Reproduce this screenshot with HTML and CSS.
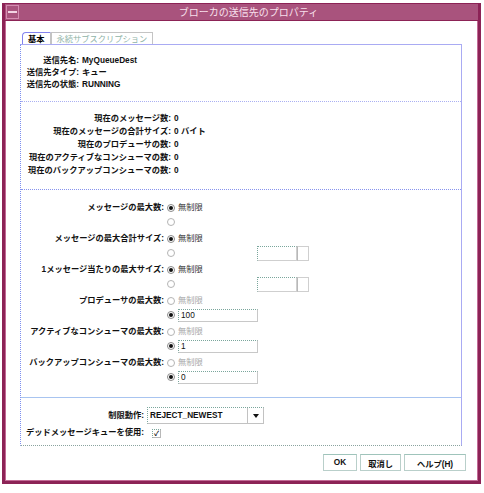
FILE: index.html
```html
<!DOCTYPE html>
<html lang="ja">
<head>
  <meta charset="UTF-8">
  <title>ブローカの送信先のプロパティ</title>
  <link rel="stylesheet" href="styles.css">
</head>
<body>
  <div class="window">
    <div class="titlebar">
      <div class="menu-btn"><span></span></div>
      <div class="title">ブローカの送信先のプロパティ</div>
    </div>
    <div class="content">
      <div class="tabs">
        <div class="tab active">基本</div>
        <div class="tab">永続サブスクリプション</div>
      </div>
      <div class="panel">
        <div class="section info">
          <div class="label">送信先名:</div><div class="value">MyQueueDest</div>
          <div class="label">送信先タイプ:</div><div class="value">キュー</div>
          <div class="label">送信先の状態:</div><div class="value">RUNNING</div>
        </div>
        <div class="section stats">
          <div class="label">現在のメッセージ数:</div><div class="value">0</div>
          <div class="label">現在のメッセージの合計サイズ:</div><div class="value">0 バイト</div>
          <div class="label">現在のプロデューサの数:</div><div class="value">0</div>
          <div class="label">現在のアクティブなコンシューマの数:</div><div class="value">0</div>
          <div class="label">現在のバックアップコンシューマの数:</div><div class="value">0</div>
        </div>
        <div class="section limits">
          <div class="label">メッセージの最大数:</div>
          <div class="opt"><span class="radio on"></span><span class="opt-text">無制限</span></div>
          <div class="label"></div>
          <div class="opt"><span class="radio"></span></div>
          <div class="label group">メッセージの最大合計サイズ:</div>
          <div class="opt group"><span class="radio on"></span><span class="opt-text">無制限</span></div>
          <div class="label"></div>
          <div class="opt"><span class="radio"></span><span class="size-box"><span class="size-field"></span><span class="size-unit"></span></span></div>
          <div class="label group">1メッセージ当たりの最大サイズ:</div>
          <div class="opt group"><span class="radio on"></span><span class="opt-text">無制限</span></div>
          <div class="label"></div>
          <div class="opt"><span class="radio"></span><span class="size-box"><span class="size-field"></span><span class="size-unit"></span></span></div>
          <div class="label group">プロデューサの最大数:</div>
          <div class="opt group"><span class="radio"></span><span class="opt-text off">無制限</span></div>
          <div class="label"></div>
          <div class="opt"><span class="radio on"></span><span class="field">100</span></div>
          <div class="label group">アクティブなコンシューマの最大数:</div>
          <div class="opt group"><span class="radio"></span><span class="opt-text off">無制限</span></div>
          <div class="label"></div>
          <div class="opt"><span class="radio on"></span><span class="field">1</span></div>
          <div class="label group">バックアップコンシューマの最大数:</div>
          <div class="opt group"><span class="radio"></span><span class="opt-text off">無制限</span></div>
          <div class="label"></div>
          <div class="opt"><span class="radio on"></span><span class="field">0</span></div>
        </div>
        <div class="section behavior">
          <div class="label">制限動作:</div>
          <div class="opt">
            <div class="combo"><span class="combo-text">REJECT_NEWEST</span><span class="combo-btn"></span></div>
          </div>
          <div class="label">デッドメッセージキューを使用:</div>
          <div class="opt"><span class="check">&#10003;</span></div>
        </div>
      </div>
      <div class="buttons">
        <button class="btn ok">OK</button>
        <button class="btn cancel">取消し</button>
        <button class="btn help">ヘルプ(H)</button>
      </div>
    </div>
  </div>
</body>
</html>
```

FILE: styles.css
```css
body {
  margin: 0;
  background: #fff;
  font-family: "Liberation Sans", "Noto Sans CJK JP", sans-serif;
  font-size: 8.25px;
  color: #111;
}
.window {
  margin: 3px 0 0 2px;
  width: 479px;
  height: 481px;
  box-sizing: border-box;
  border: 3px solid #8c2356;
  border-top-width: 1px;
  box-shadow: inset 0 0 0 1px #c36a96;
  background: #fff;
  display: flex;
  flex-direction: column;
}
.titlebar {
  height: 16px;
  background: #a9537d;
  display: flex;
  align-items: center;
  border-bottom: 1px solid #8c2356;
}
.menu-btn {
  width: 13px;
  height: 14px;
  margin-left: 1px;
  border: 1px solid #d48bb0;
  box-sizing: border-box;
  display: flex;
  align-items: center;
  justify-content: center;
}
.menu-btn span {
  width: 9px;
  height: 2px;
  background: #f2d4e3;
}
.title {
  flex: 1;
  text-align: center;
  color: #f8e0ec;
  font-size: 10px;
  font-family: "Noto Sans CJK JP", sans-serif;
  line-height: 16px;
}
.content {
  flex: 1;
  padding-top: 11px;
}
.tabs {
  display: flex;
  margin-left: 17px;
  height: 12px;
}
.tab {
  font-family: "Noto Sans CJK JP", sans-serif;
  font-size: 8.25px;
  line-height: 11px;
  padding: 0 5px;
  border: 1px solid #c4c4c4;
  border-bottom: none;
  color: #8fb4a8;
}
.tab.active {
  color: #000;
  font-weight: bold;
  border-color: #8383ee;
  border-right-color: #c4c4c4;
  border-top-left-radius: 4px;
}
.panel {
  margin: 0 16px 0 15px;
  border: 1px solid #a9abf3;
  border-left: 1px dotted #7d8ff0;
  border-bottom: 1px dotted #8aa39f;
  height: 402px;
  box-sizing: border-box;
}
.section {
  display: grid;
  column-gap: 3px;
  padding-left: 4px;
  align-items: center;
  font-weight: bold;
}
.label, .value {
  white-space: nowrap;
  line-height: 12px;
  height: 12px;
}
.label {
  text-align: right;
}
.info {
  grid-template-columns: 54px 1fr;
  grid-auto-rows: 12px;
  padding-top: 10px;
  padding-bottom: 10px;
  border-bottom: 1px dotted #aab0f2;
}
.stats {
  grid-template-columns: 146px 1fr;
  grid-auto-rows: 13px;
  padding-top: 10px;
  padding-bottom: 12px;
  border-bottom: 1px dotted #8793ee;
}
.limits {
  grid-template-columns: 139px 1fr;
  padding-top: 11px;
  padding-bottom: 13px;
  border-bottom: 1px solid #a8c4f0;
}
.limits .label {
  height: 14px;
  line-height: 14px;
}
.limits .group {
  margin-top: 3px;
}
.opt {
  display: flex;
  align-items: center;
  height: 14px;
  line-height: 14px;
  font-weight: normal;
}
.radio {
  width: 8px;
  height: 8px;
  border: 1px solid #b4b4b4;
  border-radius: 50%;
  box-sizing: border-box;
  display: inline-flex;
  align-items: center;
  justify-content: center;
  flex-shrink: 0;
}
.radio.on {
  border-color: #8a8a8a;
}
.radio.on::after {
  content: "";
  width: 4px;
  height: 4px;
  border-radius: 50%;
  background: #111;
}
.opt-text {
  margin-left: 3px;
  color: #333;
}
.opt-text.off {
  color: #a8a8a8;
}
.field {
  margin-left: 3px;
  width: 80px;
  height: 13px;
  box-sizing: border-box;
  border: 1px solid #c8c8c8;
  border-top: 1px dotted #7aa69c;
  border-left: 1px dotted #7aa69c;
  padding-left: 2px;
  line-height: 11px;
}
.size-box {
  margin-left: 82px;
  display: flex;
  height: 15px;
}
.size-field {
  width: 40px;
  box-sizing: border-box;
  border: 1px solid #cfcfcf;
  border-top: 1px dotted #7aa69c;
  border-left: 1px dotted #7aa69c;
}
.size-unit {
  width: 12px;
  box-sizing: border-box;
  border: 1px solid #cfcfcf;
  border-left-color: #b8b8b8;
}
.behavior {
  grid-template-columns: 119px 1fr;
  grid-template-rows: 21px 14px;
  padding-top: 7px;
}
.combo {
  display: flex;
  height: 17px;
  width: 117px;
  box-sizing: border-box;
  border: 1px solid #c2c2c2;
  border-top: 1px dotted #7aa69c;
  border-left: 1px dotted #7aa69c;
}
.combo-text {
  flex: 1;
  font-weight: bold;
  line-height: 15px;
  padding-left: 2px;
  border-right: 1px solid #c2c2c2;
}
.combo-btn {
  width: 15px;
  display: flex;
  align-items: center;
  justify-content: center;
}
.combo-btn::after {
  content: "";
  border-left: 3px solid transparent;
  border-right: 3px solid transparent;
  border-top: 4px solid #111;
}
.check {
  margin-left: 5px;
  width: 9px;
  height: 9px;
  box-sizing: border-box;
  border: 1px solid #b8b8b8;
  border-top: 1px dotted #7aa69c;
  border-left: 1px dotted #7aa69c;
  font-size: 7px;
  line-height: 7px;
  text-align: center;
  font-weight: bold;
}
.buttons {
  display: flex;
  justify-content: flex-end;
  gap: 3px;
  margin-top: 8px;
  padding-right: 12px;
}
.btn {
  height: 17px;
  padding: 0;
  background: #fff;
  border: 1px solid #b9cfca;
  border-top-color: #9fc4bb;
  font-family: "Liberation Sans", "Noto Sans CJK JP", sans-serif;
  font-size: 8.25px;
  font-weight: bold;
  color: #111;
}
.btn.ok {
  width: 34px;
}
.btn.cancel {
  width: 41px;
}
.btn.help {
  width: 62px;
}
```
